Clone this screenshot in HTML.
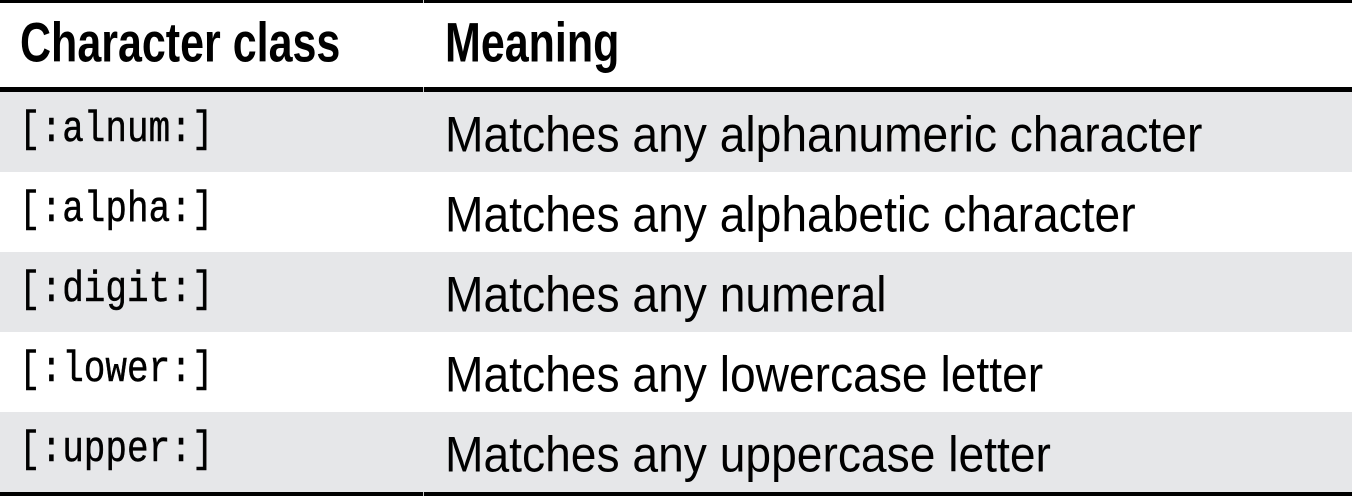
<!DOCTYPE html>
<html><head><meta charset="utf-8"><style>
html,body{margin:0;padding:0;background:#fff;}
#w{position:relative;width:1352px;height:496px;overflow:hidden;background:#fff;}
.line{position:absolute;left:0;width:1352px;background:#000;}
.row{position:absolute;left:0;width:1352px;height:80px;}
.g{background:#e6e7e9;}
.t{position:absolute;white-space:nowrap;line-height:1;transform-origin:0 100%;}
.h{font-family:"Liberation Sans",sans-serif;font-weight:bold;font-size:43px;transform:scaleY(1.3);}
.b{font-family:"Liberation Sans",sans-serif;font-size:46.2px;transform:scaleY(1.08);}
.m{font-family:"Liberation Mono",monospace;font-size:36px;transform:scaleY(1.2);-webkit-text-stroke:0.4px #000;}
.vd{position:absolute;left:423px;width:1px;background:#ccc;}
</style></head><body><div id="w">
<div class="line" style="top:0;height:3px"></div>
<div class="row g" style="top:92px"></div>
<div class="row" style="top:172px"></div>
<div class="row g" style="top:252px"></div>
<div class="row" style="top:332px"></div>
<div class="row g" style="top:412px"></div>
<div class="line" style="top:87px;height:5px"></div>
<div class="line" style="top:492px;height:4px"></div>
<div class="vd" style="top:0;height:3px"></div>
<div class="vd" style="top:87px;height:5px"></div>
<div class="vd" style="top:492px;height:4px"></div>

<div class="t h" style="left:20px;top:29px">Character class</div>
<div class="t h" style="left:445px;top:29px">Meaning</div>

<div class="t m" style="left:19px;top:116px">[:alnum:]</div>
<div class="t b" style="left:445px;top:113px">Matches any alphanumeric character</div>
<div class="t m" style="left:19px;top:196px">[:alpha:]</div>
<div class="t b" style="left:445px;top:193px">Matches any alphabetic character</div>
<div class="t m" style="left:19px;top:276px">[:digit:]</div>
<div class="t b" style="left:445px;top:273px">Matches any numeral</div>
<div class="t m" style="left:19px;top:356px">[:lower:]</div>
<div class="t b" style="left:445px;top:353px">Matches any lowercase letter</div>
<div class="t m" style="left:19px;top:436px">[:upper:]</div>
<div class="t b" style="left:445px;top:433px">Matches any uppercase letter</div>
</div></body></html>
